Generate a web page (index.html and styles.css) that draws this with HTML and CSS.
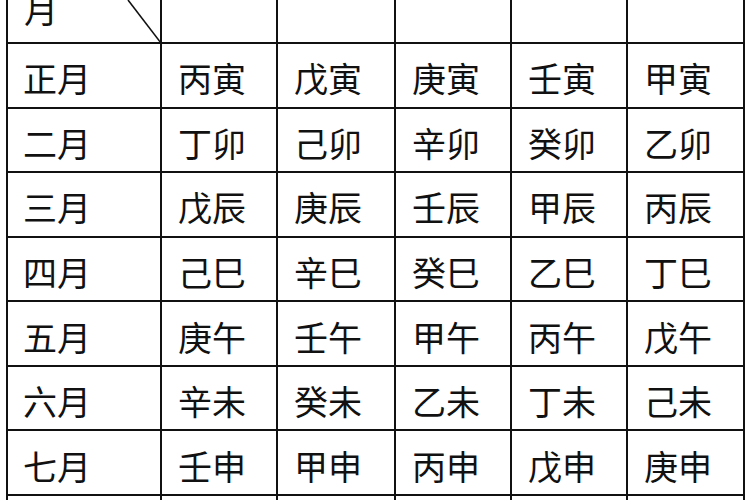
FILE: index.html
```html
<!DOCTYPE html>
<html lang="zh">
<head>
<meta charset="utf-8">
<link rel="stylesheet" href="styles.css">
</head>
<body>
<div class="sheet">
  <div class="cell head-cell">
    <span class="head-text">月</span>
    <svg class="diag" viewBox="0 0 152 42" width="152" height="42"><line x1="120" y1="0" x2="153" y2="43" stroke="#111" stroke-width="1.6"/></svg>
  </div>
  <div class="cell"></div><div class="cell"></div><div class="cell"></div><div class="cell"></div><div class="cell"></div>

  <div class="cell month">正月</div><div class="cell">丙寅</div><div class="cell">戊寅</div><div class="cell">庚寅</div><div class="cell">壬寅</div><div class="cell">甲寅</div>
  <div class="cell month">二月</div><div class="cell">丁卯</div><div class="cell">己卯</div><div class="cell">辛卯</div><div class="cell">癸卯</div><div class="cell">乙卯</div>
  <div class="cell month">三月</div><div class="cell">戊辰</div><div class="cell">庚辰</div><div class="cell">壬辰</div><div class="cell">甲辰</div><div class="cell">丙辰</div>
  <div class="cell month">四月</div><div class="cell">己巳</div><div class="cell">辛巳</div><div class="cell">癸巳</div><div class="cell">乙巳</div><div class="cell">丁巳</div>
  <div class="cell month">五月</div><div class="cell">庚午</div><div class="cell">壬午</div><div class="cell">甲午</div><div class="cell">丙午</div><div class="cell">戊午</div>
  <div class="cell month">六月</div><div class="cell">辛未</div><div class="cell">癸未</div><div class="cell">乙未</div><div class="cell">丁未</div><div class="cell">己未</div>
  <div class="cell month">七月</div><div class="cell">壬申</div><div class="cell">甲申</div><div class="cell">丙申</div><div class="cell">戊申</div><div class="cell">庚申</div>
  <div class="cell"></div><div class="cell"></div><div class="cell"></div><div class="cell"></div><div class="cell"></div><div class="cell"></div>
</div>
</body>
</html>
```
FILE: styles.css
```css
html, body {
  margin: 0;
  padding: 0;
  background: #fff;
  width: 750px;
  height: 500px;
  overflow: hidden;
}
.sheet {
  margin-left: 6px;
  width: 739px;
  display: grid;
  grid-template-columns: 152px 114px 116px 114px 114px 115px;
  grid-template-rows: 42px repeat(7, 62.57px) 20px;
  gap: 2px;
  padding: 0 2px 2px 2px;
  box-sizing: border-box;
  background: #111;
  font-family: "Noto Sans CJK SC", "Noto Sans CJK JP", sans-serif;
  font-size: 34px;
  color: #111;
}
.cell {
  background: #fff;
  display: flex;
  align-items: center;
  justify-content: flex-start;
  line-height: 34px;
  padding: 6px 0 0 16px;
  box-sizing: border-box;
  overflow: hidden;
}
.month {
  padding-left: 15px;
}
.head-cell {
  position: relative;
  align-items: flex-end;
  padding: 0 0 16px 16px;
}
.head-text {
  display: block;
  line-height: 34px;
}
.diag {
  position: absolute;
  left: 0;
  top: 0;
}
```
